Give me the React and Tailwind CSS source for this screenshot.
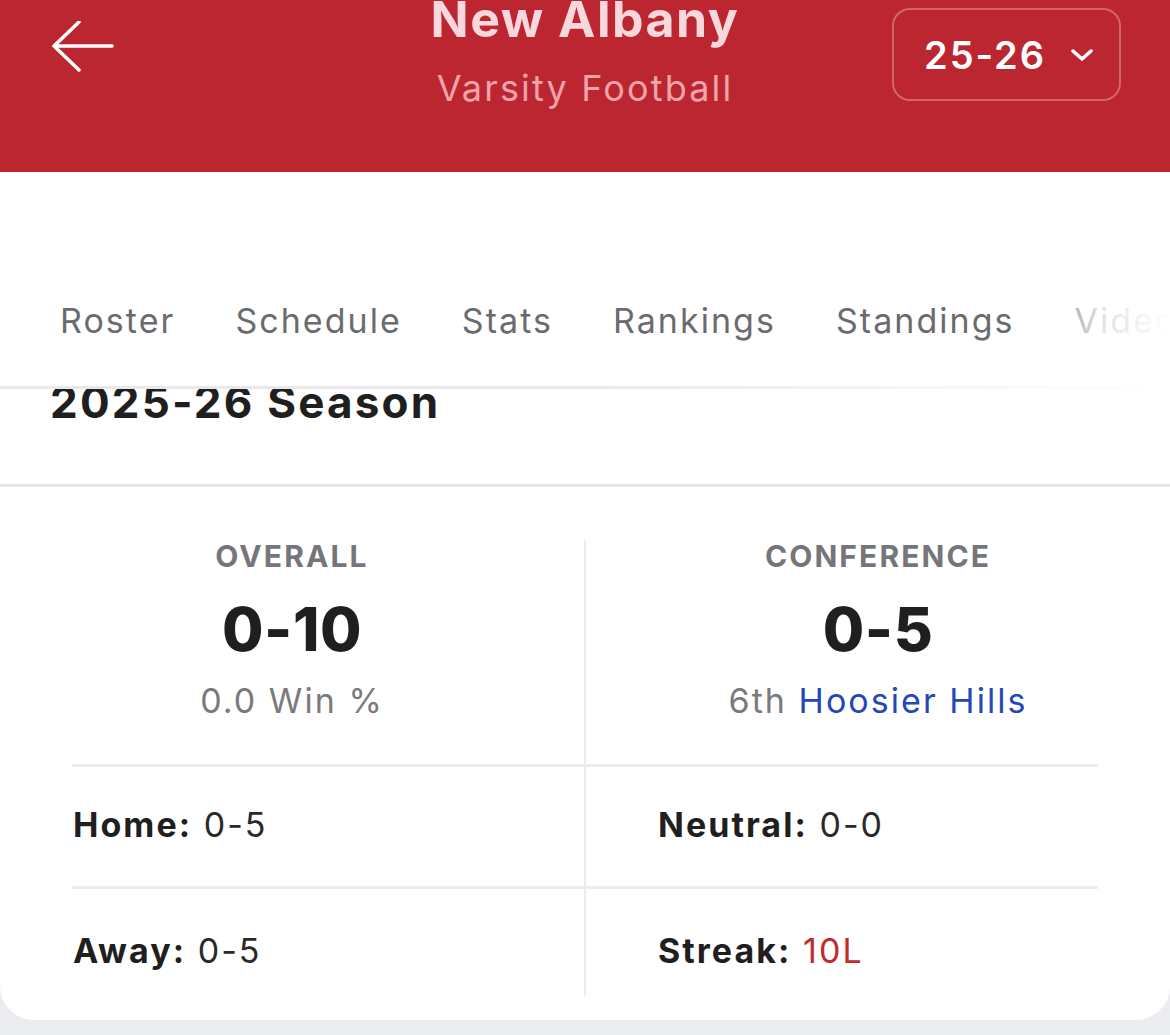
import React from "react";

const tabs = ["Roster", "Schedule", "Stats", "Rankings", "Standings", "Videos"];

const BackArrow = () => (
  <svg width="64" height="54" viewBox="0 0 64 54" fill="none">
    <path
      d="M62 25H4M29 1L4 25L29 49"
      stroke="white"
      strokeWidth="3.5"
      strokeLinecap="round"
      strokeLinejoin="round"
    />
  </svg>
);

const Chevron = () => (
  <svg width="22" height="12" viewBox="0 0 22 12" fill="none">
    <path
      d="M2 2L11 10L20 2"
      stroke="white"
      strokeWidth="3.5"
      strokeLinecap="round"
      strokeLinejoin="round"
    />
  </svg>
);

const StatLine = ({ label, value, valueClass = "text-[#2a2a2a]" }) => (
  <p className="text-[34px] leading-none tracking-[0.06em]">
    <span className="font-bold text-[#1f1f1f]">{label}</span>{" "}
    <span className={valueClass}>{value}</span>
  </p>
);

export default function App() {
  return (
    <div
      className="w-[1170px] h-[1035px] bg-[#ecedf1] overflow-hidden"
      style={{ fontFamily: "Inter, 'Noto Sans', sans-serif" }}
    >
      {/* Header */}
      <div className="h-[172px] bg-[#bb2630] grid grid-cols-[1fr_auto_1fr] items-start px-[50px]">
        <div className="pt-[21px]">
          <BackArrow />
        </div>
        <div className="flex flex-col items-center -mt-[13px]">
          <h1 className="text-[50px] font-bold leading-[64px] tracking-[0.03em] text-[#f8d8dc]">
            New Albany
          </h1>
          <p className="text-[36px] leading-[44px] mt-[15px] tracking-[0.06em] text-[#f2a3ab]">
            Varsity Football
          </p>
        </div>
        <div className="flex justify-end">
          <div className="mt-[8px] -mr-[1px] w-[229px] h-[93px] rounded-[18px] border-2 border-white/30 flex items-center justify-center gap-[25px] pl-[4px]">
            <span className="text-[38px] font-semibold tracking-[0.05em] text-white leading-none">
              25-26
            </span>
            <Chevron />
          </div>
        </div>
      </div>

      {/* Tabs */}
      <div className="relative h-[214px] bg-white flex items-end overflow-hidden">
        <div className="flex gap-[60px] pl-[60px] pb-[48px] whitespace-nowrap">
          {tabs.map((t) => (
            <span key={t} className="text-[34px] leading-none tracking-[0.06em] text-[#6b6b6d]">
              {t}
            </span>
          ))}
        </div>
        <div className="absolute right-0 top-0 bottom-0 w-[140px] bg-gradient-to-r from-white/0 via-white/80 to-white" />
      </div>
      <div className="h-[3px] bg-gradient-to-r from-[#e9e9eb] via-[#e9e9eb] to-white" />

      {/* Season header */}
      <div className="h-[95px] bg-white overflow-hidden px-[50px]">
        <h2 className="text-[44px] font-bold leading-none tracking-[0.05em] text-[#1f1f1f] -mt-[9px]">
          2025-26 Season
        </h2>
      </div>
      <div className="h-[3px] bg-[#e6e6ea]" />

      {/* Record card */}
      <div className="bg-white rounded-b-[34px] pt-[53px] pb-[24px]">
        <div className="grid grid-cols-[584px_1fr]">
          <div className="h-[224px] flex flex-col items-center">
            <p className="text-[30px] font-bold leading-none tracking-[0.07em] text-[#76767a] mt-[1px]">
              OVERALL
            </p>
            <p className="text-[60px] font-extrabold leading-none tracking-[0.01em] text-[#1f1f1f] mt-[28px]">
              0-10
            </p>
            <p className="text-[34px] leading-none tracking-[0.06em] text-[#7a7a7c] mt-[25px]">
              0.0 Win %
            </p>
          </div>
          <div className="h-[224px] flex flex-col items-center border-l-2 border-[#ececee]">
            <p className="text-[30px] font-bold leading-none tracking-[0.07em] text-[#76767a] mt-[1px]">
              CONFERENCE
            </p>
            <p className="text-[60px] font-extrabold leading-none tracking-[0.01em] text-[#1f1f1f] mt-[28px]">
              0-5
            </p>
            <p className="text-[34px] leading-none tracking-[0.06em] text-[#7a7a7c] mt-[25px]">
              6th <span className="text-[#2348b8]">Hoosier Hills</span>
            </p>
          </div>
        </div>
        <div className="h-[3px] mx-[72px] bg-[#ececee]" />
        <div className="grid grid-cols-[584px_1fr]">
          <div className="h-[119px] flex items-center pl-[73px] pb-[4px]">
            <StatLine label="Home:" value="0-5" />
          </div>
          <div className="h-[119px] flex items-center pl-[72px] pb-[4px] border-l-2 border-[#ececee]">
            <StatLine label="Neutral:" value="0-0" />
          </div>
        </div>
        <div className="h-[3px] mx-[72px] bg-[#ececee]" />
        <div className="grid grid-cols-[584px_1fr]">
          <div className="h-[107px] flex items-center pl-[73px] pt-[16px]">
            <StatLine label="Away:" value="0-5" />
          </div>
          <div className="h-[107px] flex items-center pl-[72px] pt-[16px] border-l-2 border-[#ececee]">
            <StatLine label="Streak:" value="10L" valueClass="text-[#c6282d]" />
          </div>
        </div>
      </div>
    </div>
  );
}
